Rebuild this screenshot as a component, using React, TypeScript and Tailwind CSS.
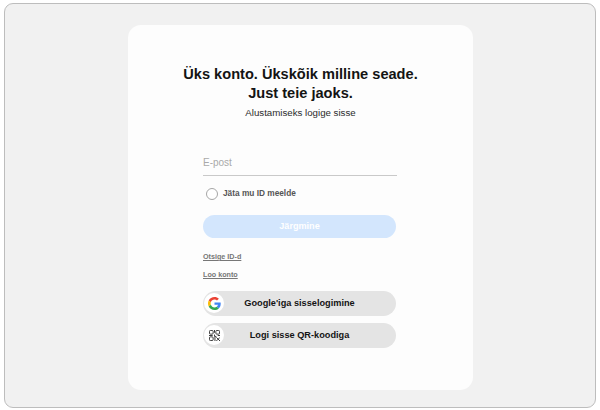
const SocialIcon = ({ children }: { children: React.ReactNode }) => (
  <span className="absolute left-[1px] top-[2px] flex h-[20px] w-[20px] items-center justify-center rounded-full bg-white">
    {children}
  </span>
);

const GoogleIcon = () => (
  <svg viewBox="0 0 48 48" className="h-[13px] w-[13px]">
    <path fill="#EA4335" d="M24 9.5c3.5 0 6.700 1.200 9.200 3.600l6.900-6.900C35.900 2.400 30.500 0 24 0 14.600 0 6.500 5.400 2.600 13.200l8 6.200C12.500 13.700 17.800 9.500 24 9.500z" />
    <path fill="#4285F4" d="M46.900 24.500c0-1.600-.1-3.100-.4-4.500H24v9h12.900c-.6 3-2.200 5.500-4.700 7.200l7.700 6c4.500-4.200 7-10.300 7-17.700z" />
    <path fill="#FBBC05" d="M10.500 28.600c-.5-1.400-.8-3-.8-4.600s.3-3.200.8-4.600l-8-6.200C.9 16.500 0 20.100 0 24s.9 7.500 2.600 10.800l7.900-6.200z" />
    <path fill="#34A853" d="M24 48c6.500 0 11.900-2.100 15.900-5.800l-7.700-6c-2.100 1.400-4.900 2.300-8.200 2.300-6.200 0-11.500-4.200-13.400-9.900l-8 6.200C6.500 42.600 14.600 48 24 48z" />
  </svg>
);

const QrIcon = () => (
  <svg viewBox="0 0 12 12" className="h-[11px] w-[11px]" fill="none" stroke="#2a2a2a" strokeWidth="1">
    <rect x="0.500" y="0.500" width="4" height="4" rx="1" />
    <rect x="7.500" y="0.500" width="4" height="4" rx="1" />
    <rect x="0.500" y="7.500" width="4" height="4" rx="1" />
    <path d="M6 0v3M0 6h4M6 5v2h2M9.500 6H12M6.500 7.500v4.500M8 8l4 4M12 8l-4 4" />
  </svg>
);

const App = () => {
  return (
    <div className="h-[410px] w-[600px] overflow-hidden bg-white px-[4px] pt-[3px] pb-[2px] font-['Liberation_Sans',Arial,sans-serif]">
      <div className="flex h-[405px] justify-center rounded-[9px] border border-[#bdbdbd] bg-[#f1f1f1] pt-[21px] pl-[1px]">
        <div className="flex h-[365px] w-[345px] flex-col items-center rounded-[13px] bg-[#fdfdfd] pt-[40px]">
          <h1 className="text-center text-[14.600px] leading-[18.500px] font-bold text-[#141414]">
            Üks konto. Ükskõik milline seade.
            <br />
            Just teie jaoks.
          </h1>
          <p className="mt-[4px] text-[9.700px] leading-[14px] text-[#2b2b2b]">Alustamiseks logige sisse</p>

          <div className="mt-[34px] ml-[-1px] w-[194px]">
            <div className="h-[22px] border-b border-[#c9c9c9] pt-[2px] text-[10px] leading-[14px] text-[#a9a9a9]">E-post</div>

            <div className="mt-[12px] flex items-center gap-[5px] pl-[3px]">
              <span className="h-[12px] w-[12px] rounded-full border border-[#a6a6a6] bg-white" />
              <span className="-mt-[2px] text-[8.300px] leading-[12px] font-bold text-[#555]">Jäta mu ID meelde</span>
            </div>

            <button className="mt-[15px] h-[23px] w-[193px] rounded-full bg-[#d3e6fd] text-[9.100px] font-bold text-white">
              Järgmine
            </button>

            <div className="mt-[14px] flex flex-col items-start gap-[9px] text-[7.200px] leading-[9px] font-bold text-[#777]">
              <a className="underline">Otsige ID-d</a>
              <a className="underline">Loo konto</a>
            </div>

            <div className="mt-[12px] flex flex-col gap-[7px]">
              <button className="relative h-[25px] w-[193px] rounded-full bg-[#e4e4e4] text-[9.200px] font-bold text-[#141414]">
                <SocialIcon>
                  <GoogleIcon />
                </SocialIcon>
                <span>Google'iga sisselogimine</span>
              </button>
              <button className="relative h-[25px] w-[193px] rounded-full bg-[#e4e4e4] text-[9.200px] font-bold text-[#141414]">
                <SocialIcon>
                  <QrIcon />
                </SocialIcon>
                <span>Logi sisse QR-koodiga</span>
              </button>
            </div>
          </div>
        </div>
      </div>
    </div>
  );
};

export default App;
